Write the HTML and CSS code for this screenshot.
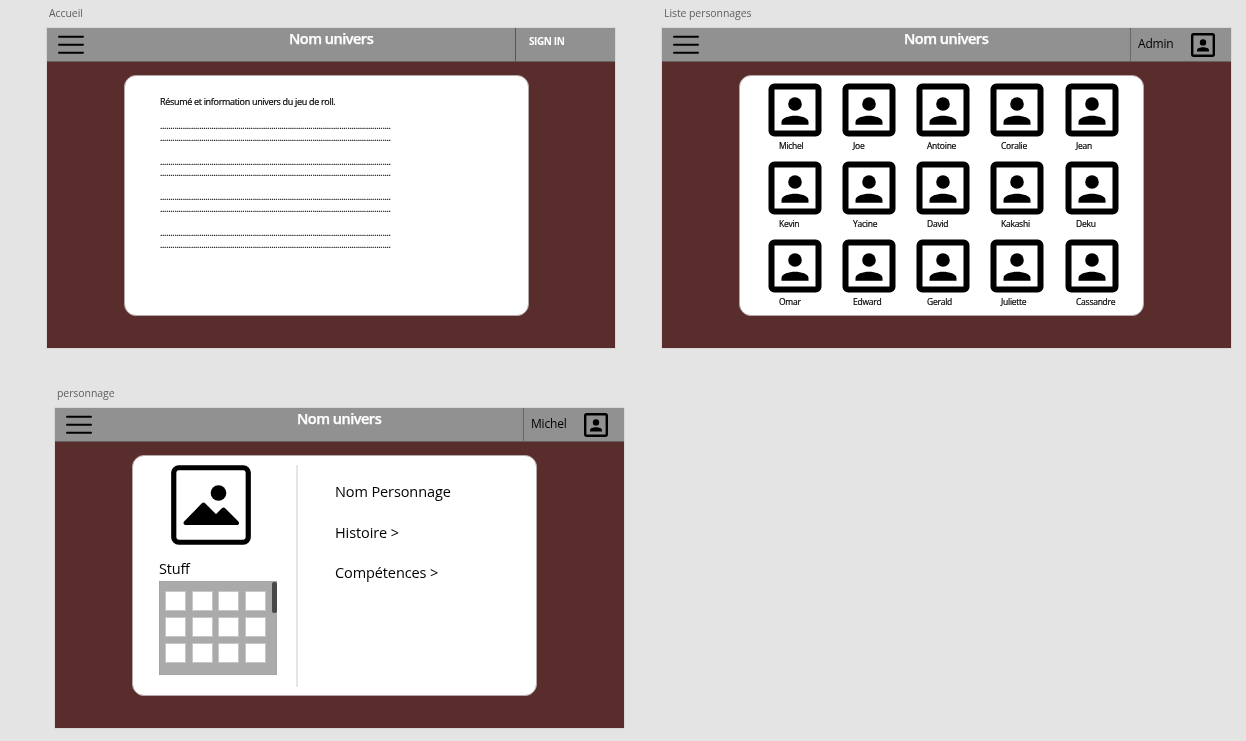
FILE: index.html
```
<!DOCTYPE html>
<html lang="fr">
<head>
<meta charset="utf-8">
<title>Nom univers</title>
<link rel="stylesheet" href="styles.css">
</head>
<body>
<svg class="defs" aria-hidden="true">
  <symbol id="menu" viewBox="0 0 26 20"><path d="M1 1.7H25M1 9.7H25M1 17.7H25" fill="none" stroke="#000" stroke-width="2" stroke-linecap="round"/></symbol>
  <symbol id="portrait" viewBox="0 0 54 54"><rect x="3.5" y="3.5" width="47" height="47" rx="2.8" fill="none" stroke="#000" stroke-width="6"/><circle cx="27" cy="21" r="6.8"/><path d="M13.5 41.8V39C13.5 35 21 32.8 27 32.8S40.5 35 40.5 39V41.8Z"/></symbol>
  <symbol id="account" viewBox="0 0 24 24"><rect x="1.2" y="1.2" width="21.6" height="21.6" rx="1.5" fill="none" stroke="#000" stroke-width="2.4"/><circle cx="12" cy="9.4" r="3.2"/><path d="M6 18.4V17.2C6 15.2 9.3 14.3 12 14.3S18 15.2 18 17.2V18.4Z"/></symbol>
</svg>
<main class="canvas">
  <section class="board board-home">
    <h2 class="board-name">Accueil</h2>
    <div class="screen">
      <header class="bar">
        <svg class="menu"><use href="#menu"/></svg>
        <h1 class="title">Nom univers</h1>
        <div class="user user-login"><span class="sign-in">SIGN IN</span></div>
      </header>
      <div class="card summary"><p class="lines">Résumé et information univers du jeu de roll.

<span class="dots">................................................................................................................
................................................................................................................

................................................................................................................
................................................................................................................

................................................................................................................
................................................................................................................

................................................................................................................
................................................................................................................</span></p></div>
    </div>
  </section>

  <section class="board board-list">
    <h2 class="board-name">Liste personnages</h2>
    <div class="screen">
      <header class="bar">
        <svg class="menu"><use href="#menu"/></svg>
        <h1 class="title">Nom univers</h1>
        <div class="user"><span class="user-name">Admin</span><svg class="account"><use href="#account"/></svg></div>
      </header>
      <div class="card people">
        <div class="person"><svg class="portrait"><use href="#portrait"/></svg><span class="name">Michel</span></div>
        <div class="person"><svg class="portrait"><use href="#portrait"/></svg><span class="name">Joe</span></div>
        <div class="person"><svg class="portrait"><use href="#portrait"/></svg><span class="name">Antoine</span></div>
        <div class="person"><svg class="portrait"><use href="#portrait"/></svg><span class="name">Coralie</span></div>
        <div class="person"><svg class="portrait"><use href="#portrait"/></svg><span class="name">Jean</span></div>
        <div class="person"><svg class="portrait"><use href="#portrait"/></svg><span class="name">Kevin</span></div>
        <div class="person"><svg class="portrait"><use href="#portrait"/></svg><span class="name">Yacine</span></div>
        <div class="person"><svg class="portrait"><use href="#portrait"/></svg><span class="name">David</span></div>
        <div class="person"><svg class="portrait"><use href="#portrait"/></svg><span class="name">Kakashi</span></div>
        <div class="person"><svg class="portrait"><use href="#portrait"/></svg><span class="name">Deku</span></div>
        <div class="person"><svg class="portrait"><use href="#portrait"/></svg><span class="name">Omar</span></div>
        <div class="person"><svg class="portrait"><use href="#portrait"/></svg><span class="name">Edward</span></div>
        <div class="person"><svg class="portrait"><use href="#portrait"/></svg><span class="name">Gerald</span></div>
        <div class="person"><svg class="portrait"><use href="#portrait"/></svg><span class="name">Juliette</span></div>
        <div class="person"><svg class="portrait"><use href="#portrait"/></svg><span class="name">Cassandre</span></div>
      </div>
    </div>
  </section>

  <section class="board board-person">
    <h2 class="board-name">personnage</h2>
    <div class="screen">
      <header class="bar">
        <svg class="menu"><use href="#menu"/></svg>
        <h1 class="title">Nom univers</h1>
        <div class="user"><span class="user-name">Michel</span><svg class="account"><use href="#account"/></svg></div>
      </header>
      <div class="card sheet">
        <div class="left">
          <svg class="picture" viewBox="0 0 80 80"><rect x="2.75" y="2.75" width="74.5" height="74.5" rx="5" fill="none" stroke="#000" stroke-width="5.2"/><circle cx="47.5" cy="28" r="7.8"/><path d="M14.5 58 32.500 39.500 45 52 52.500 44.500 66 58Z" stroke="#000" stroke-width="4" stroke-linejoin="round"/></svg>
          <h3 class="stuff">Stuff</h3>
          <div class="inventory">
            <div class="slots"><i></i><i></i><i></i><i></i><i></i><i></i><i></i><i></i><i></i><i></i><i></i><i></i></div>
            <div class="thumb"></div>
          </div>
        </div>
        <div class="right">
          <p>Nom Personnage</p>
          <p>Histoire &gt;</p>
          <p>Compétences &gt;</p>
        </div>
      </div>
    </div>
  </section>
</main>
</body>
</html>
```
FILE: styles.css
```
* { box-sizing: border-box; }
body { margin: 0; background: #e4e4e4; font-family: "Open Sans", "Noto Sans", sans-serif; color: #000; }
h1, h2, h3, p { margin: 0; font-weight: 400; }
svg { display: block; flex: none; }
.defs { position: absolute; width: 0; height: 0; }
.canvas { position: relative; width: 1246px; height: 741px; overflow: hidden; }

/* Boards on the free canvas */
.board { position: absolute; width: 569px; }
.board-home { left: 47px; top: 4px; width: 568px; }
.board-list { left: 662px; top: 4px; }
.board-person { left: 55px; top: 384px; }
.board-name { height: 24px; padding-left: 2px; font-size: 10.5px; line-height: 19px; letter-spacing: -0.08px; color: #606060; white-space: nowrap; }
.screen { height: 320px; background: #5a2d2d; box-shadow: 0 0 0 1px #d7d7d7; }

/* Greyscale text smoothing */
.board-name, .title, .sign-in, .user-name, .lines, .name, .stuff, .right { will-change: transform; }

.bar { display: flex; height: 34px; background: #919191; border-bottom: 1px solid #676262; }
.menu { width: 26px; height: 20px; margin: 7px 0 0 11px; }
.title { flex: 1; padding-left: 205px; font-size: 14.5px; font-weight: 600; line-height: 22px; letter-spacing: -0.5px; color: #fff; -webkit-text-stroke: 0.25px #fff; white-space: nowrap; }
.user { display: flex; width: 101px; border-left: 1px solid #676767; padding-left: 7px; }
.user-login { width: 100px; padding-left: 13px; border-color: #555; }
.sign-in { font-size: 10px; font-weight: 700; line-height: 27px; letter-spacing: -0.4px; color: #fff; }
.user-name { width: 53px; font-size: 12px; line-height: 32px; letter-spacing: -0.2px; }
.account { width: 24px; height: 24px; margin-top: 5px; }

.card { width: 405px; height: 241px; margin: 13px 0 0 77px; background: #fff; border: 1px solid #b5a8a8; border-radius: 12px; }
.summary { padding: 20px 0 0 35px; }
.lines { font-size: 9px; line-height: 11.900px; letter-spacing: -0.31px; -webkit-text-stroke: 0.2px #000; white-space: pre; }
.dots { letter-spacing: -0.305px; }

.people { display: grid; grid-template-columns: repeat(5, 74.300px); grid-auto-rows: 78px; padding: 7px 0 0 27.600px; }
.portrait { width: 54px; height: 54px; }
.name { display: block; padding-left: 11px; font-size: 8.500px; line-height: 17px; letter-spacing: -0.25px; -webkit-text-stroke: 0.2px #000; white-space: nowrap; }

.sheet { display: flex; padding-top: 9px; }
.left { width: 165px; height: 222px; padding-left: 26px; border-right: 2px solid #e6e6e6; }
.picture { width: 80px; height: 80px; margin-left: 12px; }
.stuff { padding-top: 12px; font-size: 14.500px; line-height: 24px; letter-spacing: -0.2px; }
.inventory { display: flex; justify-content: space-between; width: 118px; height: 94px; background: #aaa; border: 1px solid #a3a3a3; border-right: 0; }
.slots { display: grid; grid-template-columns: repeat(4, 21px); grid-auto-rows: 20px; column-gap: 5.700px; row-gap: 6px; padding: 9px 0 0 5px; }
.slots i { background: #fff; border: 1px solid #c4c8c4; }
.thumb { width: 5px; height: 31px; background: #484848; border-radius: 2px; }
.right { padding: 15px 0 0 37px; }
.right p { height: 40.500px; font-size: 14.500px; line-height: 24px; letter-spacing: -0.1px; white-space: nowrap; }
```
